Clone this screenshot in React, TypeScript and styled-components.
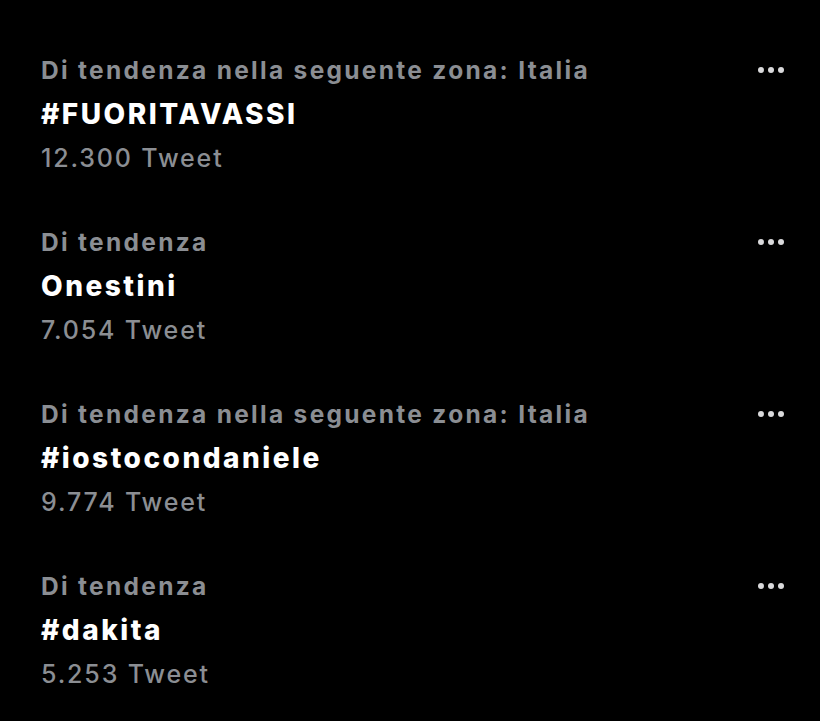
import styled, { createGlobalStyle } from 'styled-components'

const GlobalStyle = createGlobalStyle`
    html, body {
        margin: 0;
        padding: 0;
        background: #000;
    }
    body {
        font-family: Inter, "Noto Sans", sans-serif;
        -webkit-font-smoothing: antialiased;
    }
`

const Page = styled.div`
    width: 820px;
    height: 721px;
    background: #000;
    padding: 48px 0 0 41px;
    box-sizing: border-box;
    display: flex;
    flex-direction: column;
    gap: 40px;
    overflow: hidden;
`

const Trend = styled.div`
    display: flex;
    align-items: flex-start;
    justify-content: space-between;
    padding-right: 36px;
`

const Info = styled.div`
    display: flex;
    flex-direction: column;
`

const Line = styled.div`
    line-height: 44px;
    height: 44px;
    white-space: nowrap;
`

const Context = styled(Line)`
    color: #8b8e93;
    font-size: 24.5px;
    font-weight: 700;
    letter-spacing: 2.3px;
`

const Name = styled(Line)`
    color: #fff;
    font-size: 28px;
    font-weight: 800;
    letter-spacing: 2.5px;
`

const Count = styled(Line)`
    color: #8b8e93;
    font-size: 25px;
    font-weight: 500;
    letter-spacing: 1.85px;
`

const More = styled.button`
    background: none;
    border: none;
    padding: 0;
    margin-top: 19px;
    display: flex;
    gap: 4px;
    cursor: pointer;
`

const Dot = styled.span`
    width: 6px;
    height: 6px;
    border-radius: 50%;
    background: #d9d9db;
`

const trends = [
    { context: 'Di tendenza nella seguente zona: Italia', name: '#FUORITAVASSI', count: '12.300 Tweet' },
    { context: 'Di tendenza', name: 'Onestini', count: '7.054 Tweet' },
    { context: 'Di tendenza nella seguente zona: Italia', name: '#iostocondaniele', count: '9.774 Tweet' },
    { context: 'Di tendenza', name: '#dakita', count: '5.253 Tweet' },
]

export default function App() {
    return (
        <>
            <GlobalStyle />
            <Page>
                {trends.map(t => (
                    <Trend key={t.name}>
                        <Info>
                            <Context>{t.context}</Context>
                            <Name>{t.name}</Name>
                            <Count>{t.count}</Count>
                        </Info>
                        <More aria-label="Altro">
                            <Dot />
                            <Dot />
                            <Dot />
                        </More>
                    </Trend>
                ))}
            </Page>
        </>
    )
}
